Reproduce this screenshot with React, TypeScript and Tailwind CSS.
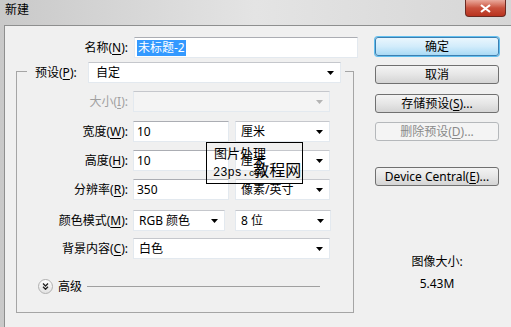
const FONT = "font-['Noto_Sans','Noto_Sans_CJK_SC',sans-serif]";

function Arrow({ disabled }: { disabled?: boolean }) {
  return (
    <svg width="7" height="4" viewBox="0 0 7 4" className="shrink-0">
      <path d="M0 0H7L3.5 4Z" fill={disabled ? '#b4b4b4' : '#000'} />
    </svg>
  );
}

function Select({ value, className, disabled }: { value?: string; className: string; disabled?: boolean }) {
  return (
    <div
      className={`flex h-[21px] items-center justify-between border border-[#e3e9ef] border-t-[#c5c7cc] pl-[5px] pr-[6px] ${
        disabled ? 'bg-[#f4f4f4]' : 'bg-white'
      } ${className}`}
    >
      <span className="leading-none">{value}</span>
      <Arrow disabled={disabled} />
    </div>
  );
}

function Input({ value, className }: { value: string; className: string }) {
  return (
    <div className={`flex h-[21px] items-center border border-[#e3e9ef] border-t-[#abadb3] bg-white pl-[3px] ${className}`}>
      <span className="leading-none">{value}</span>
    </div>
  );
}

function Label({ text, k, disabled }: { text: string; k: string; disabled?: boolean }) {
  return (
    <div className={`w-[116px] shrink-0 pr-[5px] text-right ${disabled ? 'text-[#a0a0a0]' : 'text-black'}`}>
      {text}(<span className="underline underline-offset-2">{k}</span>):
    </div>
  );
}

function Button({ children, primary, disabled, className = '' }: { children: React.ReactNode; primary?: boolean; disabled?: boolean; className?: string }) {
  let look = 'border-[#707070] bg-gradient-to-b from-[#f4f4f4] via-[#e6e6e6] to-[#d4d4d4] text-black';
  if (primary) look = 'border-[#3c7fb1] bg-gradient-to-b from-[#eaf6fd] via-[#d2ecfb] to-[#a9daf5] text-black shadow-[0_0_0_1px_#62c0f0]';
  if (disabled) look = 'border-[#b5b8bb] bg-[#f4f4f4] text-[#8a8a8a]';
  return (
    <div className={`flex h-[19px] w-[124px] items-center justify-center rounded-[3px] border leading-none ${look} ${className}`}>
      {children}
    </div>
  );
}

export default function App() {
  return (
    <div className={`relative flex h-[327px] w-[511px] flex-col overflow-hidden bg-gradient-to-r from-[#c9c9c9] via-[#e4e4e4] to-[#d6d6d6] text-[12px] ${FONT}`}>
      {/* title bar */}
      <div className="flex h-[25px] shrink-0 items-start justify-between">
        <span className="pl-[5px] pt-[4px] leading-none text-black">新建</span>
        <div className="mr-[5px] flex h-[17px] w-[41px] items-center justify-center rounded-b-[4px] border border-t-0 border-[#6b2a22] bg-gradient-to-b from-[#e9a99c] via-[#c9503c] to-[#b8321e]">
          <svg width="11" height="9" viewBox="0 0 11 9">
            <path d="M1 1L10 8M10 1L1 8" stroke="#fff" strokeWidth="2.2" />
          </svg>
        </div>
      </div>

      {/* body */}
      <div className="ml-[4px] flex flex-1 border-l border-t border-[#8e8f8f] bg-[#f0f0f0]">
        {/* left column */}
        <div className="flex w-[353px] flex-col">
          <div className="mt-[11px] flex h-[21px] items-center">
            <div className="w-[129px] pr-[6px] text-right">
              名称(<span className="underline underline-offset-2">N</span>):
            </div>
            <div className="flex h-[21px] w-[224px] items-center border border-[#e3e9ef] border-t-[#abadb3] bg-white pl-[2px]">
              <span className="bg-[#3399ff] px-px leading-[16px] text-white">未标题-2</span>
            </div>
          </div>

          {/* group box */}
          <div className="ml-[11px] mt-[13px] flex h-[242px] w-[338px] flex-col border border-[#a5a5a5]">
            <div className="-mt-[10px] ml-[10px] flex h-[21px] w-[318px] items-center bg-[#f0f0f0]">
              <div className="w-[61px] shrink-0 pl-[8px]">
                预设(<span className="underline underline-offset-2">P</span>):
              </div>
              <Select value="自定" className="w-[253px] pl-[7px]" />
            </div>

            <div className="mt-[8px] flex items-center">
              <Label text="大小" k="I" disabled />
              <Select className="w-[197px]" disabled />
            </div>
            <div className="mt-[9px] flex items-center">
              <Label text="宽度" k="W" />
              <Input value="10" className="w-[96px]" />
              <Select value="厘米" className="ml-[6px] w-[95px]" />
            </div>
            <div className="mt-[8px] flex items-center">
              <Label text="高度" k="H" />
              <Input value="10" className="w-[96px]" />
              <Select value="厘米" className="ml-[6px] w-[95px]" />
            </div>
            <div className="mt-[8px] flex items-center">
              <Label text="分辨率" k="R" />
              <Input value="350" className="w-[96px]" />
              <Select value="像素/英寸" className="ml-[6px] w-[95px]" />
            </div>
            <div className="mt-[10px] flex items-center">
              <Label text="颜色模式" k="M" />
              <Select value="RGB 颜色" className="w-[92px]" />
              <Select value="8 位" className="ml-[10px] w-[96px]" />
            </div>
            <div className="mt-[7px] flex items-center">
              <Label text="背景内容" k="C" />
              <Select value="白色" className="w-[197px]" />
            </div>

            <div className="ml-[21px] mt-[20px] flex items-center">
              <div className="flex h-[15px] w-[15px] items-center justify-center rounded-full border border-[#b0b0b0] bg-gradient-to-b from-white to-[#e2e2e2]">
                <svg width="7" height="7" viewBox="0 0 7 7">
                  <path d="M1 0.5L3.5 3L6 0.5M1 3.8L3.5 6.3L6 3.8" stroke="#222" strokeWidth="1.3" fill="none" />
                </svg>
              </div>
              <span className="ml-[5px] leading-none">高级</span>
              <div className="ml-[5px] h-px w-[233px] bg-[#a0a0a0]" />
            </div>
          </div>
        </div>

        {/* right column */}
        <div className="ml-[17px] mt-[11px] flex w-[124px] flex-col">
          <Button primary>确定</Button>
          <Button className="mt-[9px]">取消</Button>
          <Button className="mt-[10px]">
            存储预设(<span className="underline underline-offset-2">S</span>)...
          </Button>
          <Button disabled className="mt-[9px]">
            删除预设(<span className="underline underline-offset-2">D</span>)...
          </Button>
          <Button className="mt-[26px]">
            Device Central(<span className="underline underline-offset-2">E</span>)...
          </Button>
          <div className="mt-[70px] text-center leading-none">图像大小:</div>
          <div className="mt-[10px] text-center leading-none">5.43M</div>
        </div>
      </div>

      {/* watermark overlay */}
      <div className="absolute left-[206px] top-[142px] h-[42px] w-[97px] border border-black">
        <div className="pl-[7px] pt-[3px] text-[13px] leading-[15px] text-black">图片处理</div>
        <div className="flex items-end pl-[6px] leading-none text-black">
          <span className="font-['Liberation_Mono',monospace] text-[12px]">23ps.</span>
          <span className="font-['Liberation_Mono',monospace] text-[9px]">com</span>
          <span className="-ml-[12px] text-[16px] leading-[18px]">教程网</span>
        </div>
      </div>
    </div>
  );
}
